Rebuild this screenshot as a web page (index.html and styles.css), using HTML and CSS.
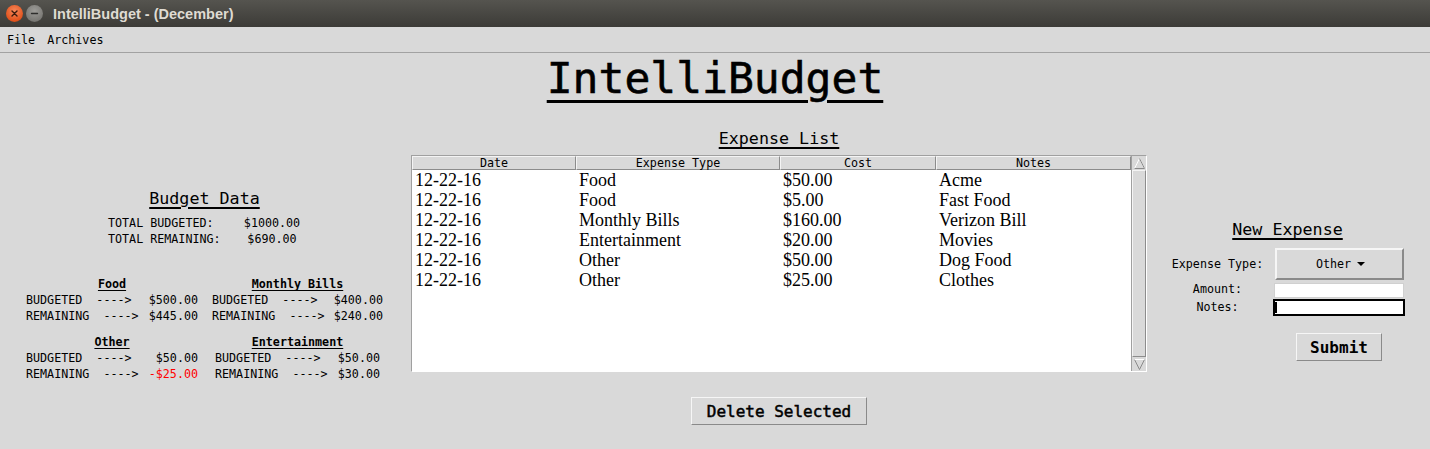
FILE: index.html
```html
<!DOCTYPE html>
<html lang="en">
<head>
<meta charset="utf-8">
<title>IntelliBudget - (December)</title>
<link rel="stylesheet" href="styles.css">
</head>
<body>
<div class="titlebar">
  <div class="win-buttons">
    <span class="win-btn close"><svg width="17" height="17" viewBox="0 0 17 17"><path d="M6 6 L11 11 M11 6 L6 11" stroke="#3a1a0c" stroke-width="1.4" stroke-linecap="round"/></svg></span>
    <span class="win-btn minimize"><svg width="17" height="17" viewBox="0 0 17 17"><path d="M5.5 8.5 H11.5" stroke="#2e2e2c" stroke-width="1.4" stroke-linecap="round"/></svg></span>
  </div>
  <div class="win-title">IntelliBudget - (December)</div>
</div>
<div class="menubar">
  <span class="menu-item">File</span>
  <span class="menu-item">Archives</span>
</div>
<main class="app">
  <h1 class="app-title"><span>IntelliBudget</span></h1>
  <div class="columns">
    <section class="budget">
      <h2 class="section-title"><span>Budget Data</span></h2>
      <div class="totals">
        <span>TOTAL BUDGETED:</span><span class="total-val">$1000.00</span>
        <span>TOTAL REMAINING:</span><span class="total-val">$690.00</span>
      </div>
      <div class="categories">
        <div class="cat">
          <div class="cat-title"><span>Food</span></div>
          <div class="cat-row"><span class="pre">BUDGETED  ----&gt;</span><span>$500.00</span></div>
          <div class="cat-row"><span class="pre">REMAINING  ----&gt;</span><span>$445.00</span></div>
        </div>
        <div class="cat">
          <div class="cat-title"><span>Monthly Bills</span></div>
          <div class="cat-row"><span class="pre">BUDGETED  ----&gt;</span><span>$400.00</span></div>
          <div class="cat-row"><span class="pre">REMAINING  ----&gt;</span><span>$240.00</span></div>
        </div>
        <div class="cat">
          <div class="cat-title"><span>Other</span></div>
          <div class="cat-row"><span class="pre">BUDGETED  ----&gt;</span><span>$50.00</span></div>
          <div class="cat-row"><span class="pre">REMAINING  ----&gt;</span><span class="negative">-$25.00</span></div>
        </div>
        <div class="cat cat-inset">
          <div class="cat-title"><span>Entertainment</span></div>
          <div class="cat-row"><span class="pre">BUDGETED  ----&gt;</span><span>$50.00</span></div>
          <div class="cat-row"><span class="pre">REMAINING  ----&gt;</span><span>$30.00</span></div>
        </div>
      </div>
    </section>

    <section class="expenses">
      <h2 class="section-title"><span>Expense List</span></h2>
      <div class="listbox">
        <div class="list-area">
          <div class="list-head">
            <div class="hcell">Date</div>
            <div class="hcell">Expense Type</div>
            <div class="hcell">Cost</div>
            <div class="hcell">Notes</div>
          </div>
          <div class="list-body">
            <div class="list-row"><span>12-22-16</span><span>Food</span><span>$50.00</span><span>Acme</span></div>
            <div class="list-row"><span>12-22-16</span><span>Food</span><span>$5.00</span><span>Fast Food</span></div>
            <div class="list-row"><span>12-22-16</span><span>Monthly Bills</span><span>$160.00</span><span>Verizon Bill</span></div>
            <div class="list-row"><span>12-22-16</span><span>Entertainment</span><span>$20.00</span><span>Movies</span></div>
            <div class="list-row"><span>12-22-16</span><span>Other</span><span>$50.00</span><span>Dog Food</span></div>
            <div class="list-row"><span>12-22-16</span><span>Other</span><span>$25.00</span><span>Clothes</span></div>
          </div>
        </div>
        <div class="scrollbar">
          <div class="sb-arrow"><svg width="13" height="13" viewBox="0 0 13 13"><path d="M6.5 1.5 L11.5 11.5 L1.5 11.5 Z" fill="#d9d9d9" stroke="#ffffff" stroke-width="1"/><path d="M6.5 1.5 L11.5 11.5 L1.5 11.5" fill="none" stroke="#8a8a8a" stroke-width="1"/></svg></div>
          <div class="sb-trough"></div>
          <div class="sb-arrow"><svg width="13" height="13" viewBox="0 0 13 13"><path d="M1.5 1.5 L11.5 1.5 L6.5 11.5 Z" fill="#d9d9d9" stroke="#8a8a8a" stroke-width="1"/><path d="M1.5 1.5 L11.5 1.5" fill="none" stroke="#ffffff" stroke-width="1"/></svg></div>
        </div>
      </div>
      <button class="tk-btn delete-btn" type="button">Delete Selected</button>
    </section>

    <section class="new-expense">
      <h2 class="section-title"><span>New Expense</span></h2>
      <div class="form">
        <label class="form-label">Expense Type:</label>
        <div class="dropdown">Other <span class="caret"></span></div>
        <label class="form-label">Amount:</label>
        <div class="entry"></div>
        <label class="form-label">Notes:</label>
        <div class="entry focused"><span class="cursor"></span></div>
        <div></div>
        <div class="submit-wrap"><button class="tk-btn submit-btn" type="button">Submit</button></div>
      </div>
    </section>
  </div>
</main>
</body>
</html>
```
FILE: styles.css
```css
* { box-sizing: border-box; }
html, body { margin: 0; padding: 0; }
body {
  width: 1430px;
  height: 449px;
  overflow: hidden;
  background: #d9d9d9;
  font-family: "DejaVu Sans Mono", "Liberation Mono", monospace;
  color: #000;
}

/* window title bar */
.titlebar {
  height: 27px;
  display: flex;
  align-items: center;
  background: linear-gradient(#55544f, #3c3b37);
  color: #dfdbd2;
}
.win-buttons { display: flex; gap: 3px; padding-left: 6px; }
.win-btn {
  width: 17px; height: 17px; border-radius: 50%;
  display: flex; align-items: center; justify-content: center;
}
.win-btn.close { background: radial-gradient(circle at 50% 35%, #f6875a, #e2531d 70%, #b8400f); }
.win-btn.minimize { background: radial-gradient(circle at 50% 35%, #9d9c98, #7a7975 70%, #5f5e5a); }
.win-title {
  margin-left: 10px;
  font-family: "Liberation Sans", "DejaVu Sans", sans-serif;
  font-weight: bold;
  font-size: 14.5px;
}

/* menu bar */
.menubar {
  height: 26px;
  display: flex;
  align-items: center;
  padding-left: 1px;
  border-bottom: 1px solid #a2a2a2;
  font-size: 11.7px;
}
.menu-item { padding: 0 6px; }

/* app */
.app { padding-top: 4px; }
.app-title {
  margin: 0;
  text-align: center;
  font-size: 43px;
  line-height: 43px;
  font-weight: normal;
  height: 43px;
}
.app-title span {
  text-decoration: underline;
  text-decoration-thickness: 3px;
  text-underline-offset: 7px;
  -webkit-text-stroke: 0.6px #000;
}

.columns {
  display: flex;
  align-items: flex-start;
  padding-left: 26px;
}

.section-title {
  margin: 0;
  text-align: center;
  font-size: 16.7px;
  line-height: 20px;
  font-weight: normal;
  height: 20px;
}
.section-title span {
  text-decoration: underline;
  text-decoration-thickness: 2px;
  text-underline-offset: 3px;
}

/* budget data */
.budget {
  width: 357px;
  padding-top: 88px;
  font-size: 11.7px;
}
.budget .section-title { margin-bottom: 7px; }
.totals {
  display: grid;
  grid-template-columns: 114px 58px;
  column-gap: 21px;
  justify-content: center;
  line-height: 16px;
  margin-bottom: 29px;
  white-space: nowrap;
}
.total-val { text-align: center; }

.categories {
  display: grid;
  grid-template-columns: 172px 171px;
  column-gap: 14px;
  row-gap: 10px;
  line-height: 16px;
}
.cat-title {
  text-align: center;
  font-weight: bold;
}
.cat-title span {
  text-decoration: underline;
  text-decoration-thickness: 1px;
  text-underline-offset: 2px;
}
.cat-row { display: flex; justify-content: space-between; }
.cat-inset { padding: 0 3px; }
.pre { white-space: pre; }
.negative { color: #ff0000; }

/* expense list */
.expenses {
  width: 736px;
  margin-left: 28px;
  padding-top: 28px;
  display: flex;
  flex-direction: column;
  align-items: center;
}
.expenses .section-title { margin-bottom: 7px; width: 100%; }
.listbox {
  width: 736px;
  height: 217px;
  display: flex;
  border: 1px solid #a0a0a0;
  border-right-color: #ffffff;
  border-bottom-color: #ffffff;
  background: #fff;
}
.list-area { flex: 1; display: flex; flex-direction: column; }
.list-head {
  display: grid;
  grid-template-columns: 164px 204px 156px 195px;
  height: 14px;
}
.hcell {
  background: #d9d9d9;
  border: 1px solid;
  border-color: #f4f4f4 #8c8c8c #8c8c8c #f4f4f4;
  font-size: 11.7px;
  line-height: 12px;
  text-align: center;
}
.list-body { padding-top: 0; }
.list-row {
  display: grid;
  grid-template-columns: 164px 204px 156px 195px;
  height: 20px;
  font-family: "Liberation Serif", "Times New Roman", serif;
  font-size: 18px;
  line-height: 20px;
}
.list-row span { padding-left: 3px; white-space: pre; }

.scrollbar {
  width: 15px;
  background: #d9d9d9;
  display: flex;
  flex-direction: column;
  border-left: 1px solid #a0a0a0;
}
.sb-arrow {
  height: 14px;
  display: flex;
  align-items: center;
  justify-content: center;
}
.sb-trough {
  flex: 1;
  border: 1px solid;
  border-color: #f4f4f4 #8c8c8c #8c8c8c #f4f4f4;
}

.tk-btn {
  font-family: "DejaVu Sans Mono", monospace;
  background: #d9d9d9;
  border: 1px solid;
  border-color: #f6f6f6 #8a8a8a #8a8a8a #f6f6f6;
  color: #000;
  padding: 0;
}
.delete-btn {
  margin-top: 25px;
  width: 176px;
  height: 28px;
  font-size: 16px;
  -webkit-text-stroke: 0.5px #000;
}

/* new expense */
.new-expense {
  width: 235px;
  margin-left: 23px;
  padding-top: 119px;
}
.new-expense .section-title { margin-bottom: 9px; }
.form {
  display: grid;
  grid-template-columns: 95px 132px;
  column-gap: 8px;
  align-items: center;
  font-size: 11.7px;
}
.form-label { text-align: center; }
.dropdown {
  height: 32px;
  margin: 0 1px 0 2px;
  border: 2px solid;
  border-color: #f6f6f6 #8a8a8a #8a8a8a #f6f6f6;
  display: flex;
  align-items: center;
  justify-content: center;
  gap: 6px;
  font-size: 11.7px;
  padding-left: 2px;
}
.caret {
  width: 0; height: 0;
  border-left: 4px solid transparent;
  border-right: 4px solid transparent;
  border-top: 4px solid #000;
}
.entry {
  height: 15px;
  margin: 3px 1px 0 1px;
  background: #fff;
  border: 1px solid #d0d0d0;
}
.entry.focused {
  height: 17px;
  margin: 1px 0 0 0;
  border: 1px solid #000;
  outline: 1px solid #000;
  outline-offset: -2px;
  display: flex;
  align-items: center;
  padding-left: 1px;
}
.cursor { width: 2px; height: 11px; background: #000; }
.submit-wrap { display: flex; justify-content: center; padding-top: 17px; }
.submit-btn {
  width: 86px;
  height: 28px;
  font-size: 16px;
  font-weight: bold;
}
```
